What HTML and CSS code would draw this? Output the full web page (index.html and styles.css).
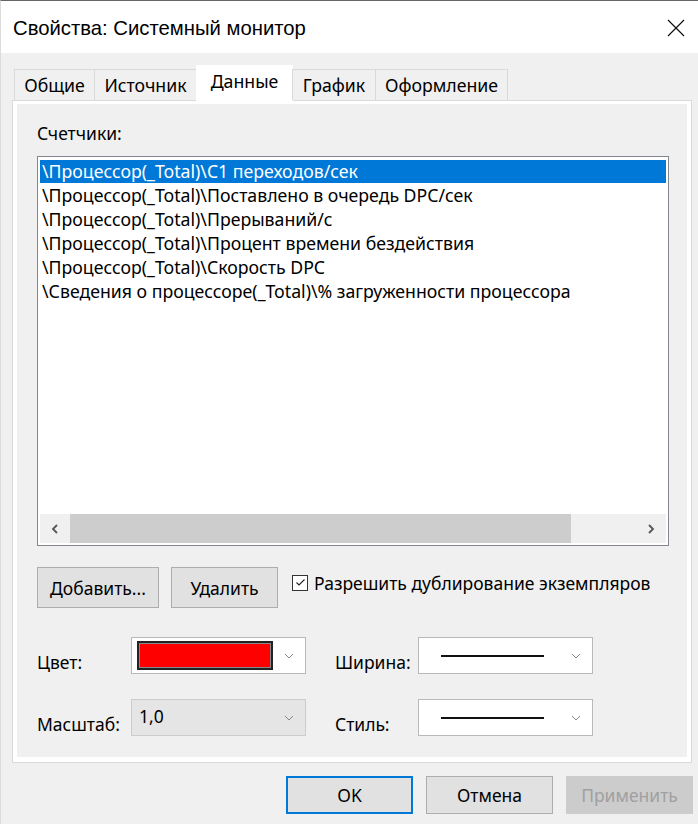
FILE: index.html
```html
<!DOCTYPE html>
<html lang="ru">
<head>
<meta charset="utf-8">
<title>Свойства: Системный монитор</title>
<link rel="stylesheet" href="styles.css">
</head>
<body>
<div class="window">
  <div class="titlebar">
    <span class="title">Свойства: Системный монитор</span>
    <svg class="close" width="18" height="18" viewBox="0 0 18 18"><path d="M1 1 L17 17 M17 1 L1 17" stroke="#111" stroke-width="1.2" fill="none"/></svg>
  </div>
  <div class="client">
    <div class="tabs">
      <div class="tab t1">Общие</div>
      <div class="tab t2">Источник</div>
      <div class="tab active t3">Данные</div>
      <div class="tab t4">График</div>
      <div class="tab t5">Оформление</div>
    </div>
    <div class="panel">
      <div class="panel-inner">
        <div class="label-counters">Счетчики:</div>
        <div class="listbox">
          <div class="rows">
            <div class="row selected">\Процессор(_Total)\C1 переходов/сек</div>
            <div class="row">\Процессор(_Total)\Поставлено в очередь DPC/сек</div>
            <div class="row">\Процессор(_Total)\Прерываний/с</div>
            <div class="row">\Процессор(_Total)\Процент времени бездействия</div>
            <div class="row">\Процессор(_Total)\Скорость DPC</div>
            <div class="row">\Сведения о процессоре(_Total)\% загруженности процессора</div>
          </div>
          <div class="hscroll">
            <div class="arrow"><svg width="8" height="10" viewBox="0 0 8 10"><path d="M6 1 L2 5 L6 9" stroke="#555" stroke-width="1.8" fill="none"/></svg></div>
            <div class="track"><div class="thumb"></div></div>
            <div class="arrow"><svg width="8" height="10" viewBox="0 0 8 10"><path d="M2 1 L6 5 L2 9" stroke="#555" stroke-width="1.8" fill="none"/></svg></div>
          </div>
        </div>
        <div class="actions">
          <button class="btn btn-add">Добавить...</button>
          <button class="btn btn-del">Удалить</button>
          <label class="check">
            <span class="box"><svg width="13" height="13" viewBox="0 0 13 13"><path d="M2.5 6.5 L5 9 L10.5 3.5" stroke="#222" stroke-width="1.1" fill="none"/></svg></span>
            <span>Разрешить дублирование экземпляров</span>
          </label>
        </div>
        <div class="grid">
          <div class="lbl">Цвет:</div>
          <div class="combo">
            <div class="swatch"></div>
            <svg class="chev" width="10" height="6" viewBox="0 0 10 6"><path d="M1 1 L5 5 L9 1" stroke="#888" stroke-width="1" fill="none"/></svg>
          </div>
          <div class="lbl lbl-r">Ширина:</div>
          <div class="combo">
            <div class="line"></div>
            <svg class="chev" width="10" height="6" viewBox="0 0 10 6"><path d="M1 1 L5 5 L9 1" stroke="#888" stroke-width="1" fill="none"/></svg>
          </div>
          <div class="lbl">Масштаб:</div>
          <div class="combo disabled">
            <span class="val">1,0</span>
            <svg class="chev" width="10" height="6" viewBox="0 0 10 6"><path d="M1 1 L5 5 L9 1" stroke="#888" stroke-width="1" fill="none"/></svg>
          </div>
          <div class="lbl lbl-r">Стиль:</div>
          <div class="combo">
            <div class="line"></div>
            <svg class="chev" width="10" height="6" viewBox="0 0 10 6"><path d="M1 1 L5 5 L9 1" stroke="#888" stroke-width="1" fill="none"/></svg>
          </div>
        </div>
      </div>
    </div>
    <div class="footer">
      <button class="btn fbtn default">OK</button>
      <button class="btn fbtn">Отмена</button>
      <button class="btn fbtn disabled-btn">Применить</button>
    </div>
  </div>
</div>
</body>
</html>
```

FILE: styles.css
```css
* { box-sizing: border-box; }
html, body { margin: 0; padding: 0; }
body {
  width: 698px;
  height: 824px;
  overflow: hidden;
  background: #f0f0f0;
  font-family: "Noto Sans", "Liberation Sans", sans-serif;
  font-size: 17.5px;
  color: #000;
}
.window {
  width: 698px;
  height: 824px;
  border-top: 1px solid #666;
  border-left: 1px solid #dcdcdc;
  display: flex;
  flex-direction: column;
}
.titlebar {
  height: 52px;
  background: #fff;
  display: flex;
  align-items: center;
  justify-content: space-between;
  padding: 0 12px 0 12px;
  flex-shrink: 0;
}
.title {
  font-family: "Liberation Sans", Arial, sans-serif;
  font-size: 20.3px;
  color: #000;
  margin-top: 2px;
}
.close { margin-right: 1px; margin-top: 2px; }
.client {
  flex: 1;
  background: #f0f0f0;
  padding-top: 16px;
}
.tabs {
  display: flex;
  align-items: flex-end;
  margin-left: 13px;
  height: 31px;
  position: relative;
  z-index: 2;
}
.tab {
  height: 31px;
  font-size: 17.7px;
  line-height: 24px;
  display: flex;
  align-items: center;
  justify-content: center;
  border: 1px solid #d9d9d9;
  border-bottom: none;
  background: #f0f0f0;
  margin-right: -1px;
  color: #000;
}
.t1 { width: 81px; }
.t2 { width: 103px; }
.t3 { width: 97px; }
.t4 { width: 84px; }
.t5 { width: 133px; }
.tab.active {
  height: 36px;
  background: #fff;
  border-color: #fff;
  margin-bottom: -1px;
  align-items: flex-start;
  padding-top: 3px;
}
.panel {
  margin: 0 6px 0 11px;
  height: 663px;
  border: 1px solid #dadada;
  background: #fff;
  padding: 3px 4px 5px 4px;
  position: relative;
  z-index: 1;
}
.panel-inner {
  background: #f0f0f0;
  height: 100%;
  padding: 17px 18px 0 20px;
}
.label-counters {
  height: 35px;
  line-height: 24px;
}
.listbox {
  width: 632px;
  height: 390px;
  border: 1px solid #828790;
  background: #fff;
  padding: 3px 2px 2px 2px;
  display: flex;
  flex-direction: column;
}
.rows { flex: 1; }
.row {
  height: 24px;
  line-height: 23px;
  font-size: 17.7px;
  padding-left: 2px;
  white-space: nowrap;
}
.row.selected {
  background: #0078d7;
  color: #fff;
  height: 23px;
  line-height: 22px;
  margin-bottom: 1px;
}
.hscroll {
  height: 29px;
  display: flex;
  background: #f0f0f0;
}
.arrow {
  width: 30px;
  display: flex;
  align-items: center;
  justify-content: center;
}
.track {
  flex: 1;
  display: flex;
}
.thumb {
  width: 501px;
  background: #cdcdcd;
}
.actions {
  display: flex;
  align-items: center;
  margin-top: 21px;
  height: 41px;
}
.btn {
  font-family: "Noto Sans", "Liberation Sans", sans-serif;
  font-size: 17.5px;
  background: #e1e1e1;
  border: 1px solid #adadad;
  color: #000;
  padding: 0;
  height: 41px;
}
.btn-add { width: 122px; }
.btn-del { width: 107px; margin-left: 12px; }
.check {
  display: flex;
  align-items: center;
  margin-left: 14px;
  margin-bottom: 10px;
}
.box {
  width: 16px;
  height: 16px;
  border: 1px solid #333;
  background: #fff;
  display: flex;
  align-items: center;
  justify-content: center;
  margin-right: 6px;
}
.grid {
  display: grid;
  grid-template-columns: 94px 175px 112px 175px;
  grid-template-rows: 37px 37px;
  row-gap: 25px;
  margin-top: 29px;
  align-items: center;
}
.lbl { margin-top: 13px; line-height: 24px; }
.lbl-r { padding-left: 29px; }
.combo {
  height: 37px;
  border: 1px solid #b9b9b9;
  background: #fff;
  display: flex;
  align-items: center;
  position: relative;
}
.combo .chev { position: absolute; right: 11px; top: 15px; }
.swatch {
  margin-left: 5px;
  width: 136px;
  height: 29px;
  background: #ff0000;
  border: 2px solid #222;
  box-shadow: inset 0 0 0 1px #888;
}
.line {
  margin-left: 22px;
  width: 103px;
  height: 2px;
  background: #111;
}
.combo.disabled {
  background: #e5e5e5;
  border-color: #cccccc;
}
.val {
  margin-left: 7px;
  margin-bottom: 4px;
  line-height: 24px;
}
.footer {
  display: flex;
  justify-content: flex-end;
  gap: 13px;
  padding-right: 5px;
  margin-top: 13px;
}
.fbtn {
  width: 127px;
  height: 38px;
}
.default {
  border: 2px solid #0078d7;
}
.disabled-btn {
  background: #cccccc;
  border-color: #cccccc;
  color: #a0a0a0;
}
```
